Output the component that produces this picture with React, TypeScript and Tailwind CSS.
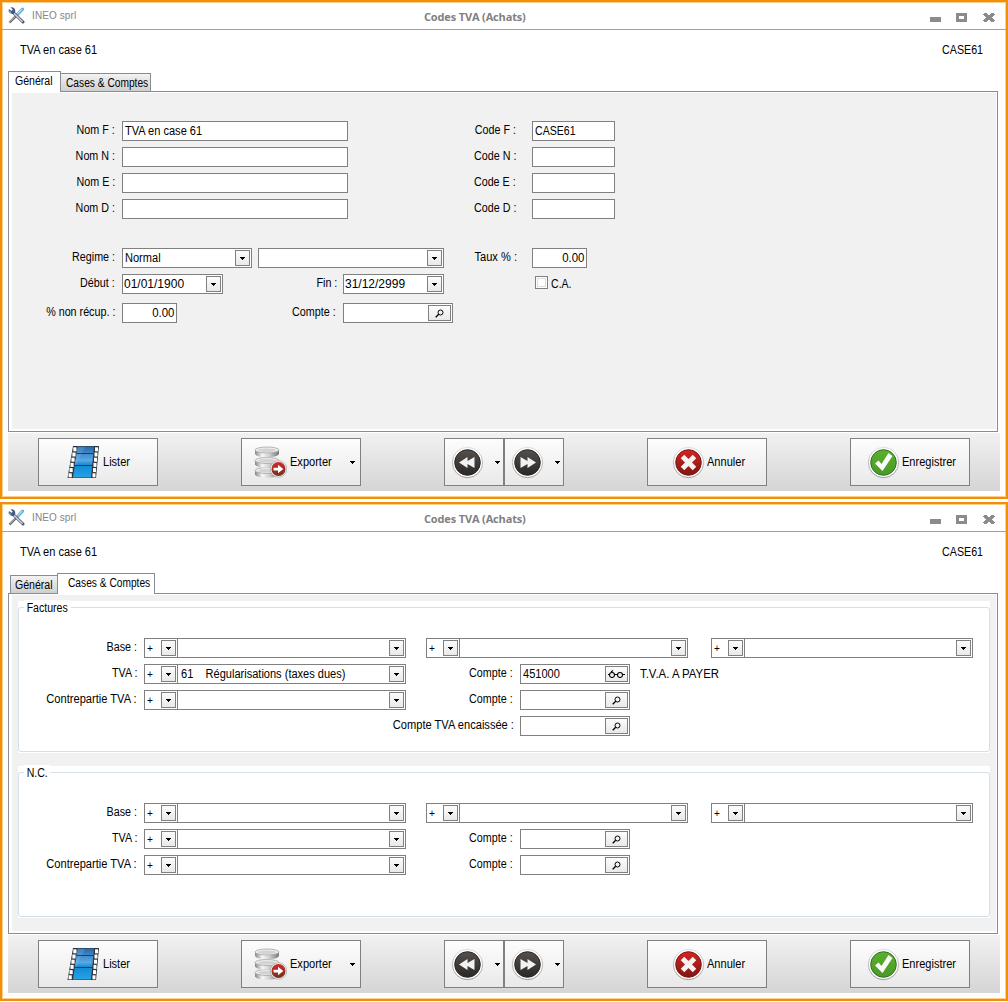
import React from "react";

function Tools() {
  return (
    <svg width="17" height="17" viewBox="0 0 17 17" className="shrink-0">
      <path d="M14.5 2.2 L9 8" stroke="#63aede" strokeWidth="3.2" strokeLinecap="round" />
      <path d="M14.3 1.8 L9.5 6.8" stroke="#b4def5" strokeWidth="1.2" />
      <path d="M9 8 L1.5 15.5" stroke="#5c5c5c" strokeWidth="2.4" />
      <path d="M8 8.6 L1.5 15" stroke="#d5d5d5" strokeWidth="1" />
      <path d="M5.2 5.5 L15 15" stroke="#4b5563" strokeWidth="3" strokeLinecap="round" />
      <path d="M6 6.4 L14.6 14.7" stroke="#c9d0da" strokeWidth="1.5" />
      <path d="M1 2.6 Q0.6 6.5 5 6.5 L7 4.4 Q7 0.5 3.4 0.5 L5 2.6 L3.5 4.2 Z" fill="#3f6297" stroke="#2b3b5c" strokeWidth="0.6" />
      <path d="M1.4 4 L3 5.6" stroke="#a8c8ea" strokeWidth="1" />
    </svg>
  );
}

function Film() {
  const holes = [0, 1, 2, 3, 4, 5];
  return (
    <svg width="33" height="34" viewBox="0 0 33 34" className="shrink-0">
      <defs>
        <linearGradient id="film" x1="0" y1="0" x2="0" y2="1">
          <stop offset="0" stopColor="#2767ad" />
          <stop offset="0.45" stopColor="#59a9e3" />
          <stop offset="0.6" stopColor="#1289d3" />
          <stop offset="1" stopColor="#27a3e6" />
        </linearGradient>
      </defs>
      <path d="M6 1 H32 L29 33 H0.5 Z" fill="#30343a" />
      <path d="M10.5 1.5 H27 L24 32.5 H6 Z" fill="url(#film)" />
      <path d="M11 2 H18 L9 20 L7.5 20 Z" fill="#8fc6ee" opacity="0.25" />
      <path d="M10 8.5 H26.5 M7.5 20.5 H25.5" stroke="#17406b" strokeWidth="1.2" />
      {holes.map((i) => (
        <g key={i} fill="#fff">
          <rect x={6.3 - i * 0.95} y={2.3 + i * 5.2} width="3.2" height="4" />
          <rect x={28 - i * 0.5} y={2.3 + i * 5.2} width="3" height="4" />
        </g>
      ))}
    </svg>
  );
}

function Database() {
  return (
    <svg width="33" height="34" viewBox="0 0 33 34" className="shrink-0">
      <defs>
        <linearGradient id="disk" x1="0" y1="0" x2="1" y2="0">
          <stop offset="0" stopColor="#858585" />
          <stop offset="0.3" stopColor="#f7f7f7" />
          <stop offset="0.6" stopColor="#cfcfcf" />
          <stop offset="1" stopColor="#777" />
        </linearGradient>
        <linearGradient id="exp" x1="0" y1="0" x2="0" y2="1">
          <stop offset="0" stopColor="#d3292c" />
          <stop offset="1" stopColor="#6e3417" />
        </linearGradient>
      </defs>
      {[22.5, 12.5, 2].map((y) => (
        <g key={y} transform={`translate(0 ${y})`}>
          <path d="M1 3 V7 Q3 10.200 13 10.200 Q23 10.200 25 7 V3 Z" fill="url(#disk)" />
          <ellipse cx="13" cy="3" rx="12" ry="3" fill="#ededed" stroke="#a5a5a5" strokeWidth="0.8" />
          <ellipse cx="13" cy="3.2" rx="9" ry="1.800" fill="#d3d3d3" />
        </g>
      ))}
      <circle cx="24.500" cy="24" r="8.300" fill="#ececec" stroke="#a5a5a5" strokeWidth="0.7" />
      <circle cx="24.500" cy="24" r="7" fill="url(#exp)" />
      <path d="M19.500 22.700 H24 V19.700 L29.300 24 L24 28.300 V25.400 H19.500 Z" fill="#fff" />
    </svg>
  );
}

function Round({ kind }: { kind: "back" | "next" | "cancel" | "ok" }) {
  const fill = { back: "#55504c", next: "#55504c", cancel: "#d62424", ok: "#5bb02b" }[kind];
  const dark = { back: "#2b2725", next: "#2b2725", cancel: "#7d1713", ok: "#2d7223" }[kind];
  return (
    <svg width="33" height="33" viewBox="0 0 33 33" className="shrink-0">
      <defs>
        <linearGradient id={"rim" + kind} x1="0" y1="0" x2="0" y2="1">
          <stop offset="0" stopColor="#dddddd" />
          <stop offset="1" stopColor="#999999" />
        </linearGradient>
        <linearGradient id={"face" + kind} x1="0" y1="0" x2="0" y2="1">
          <stop offset="0" stopColor={fill} />
          <stop offset="1" stopColor={kind === "ok" ? "#4a9a26" : dark} />
        </linearGradient>
      </defs>
      <circle cx="16.500" cy="16.500" r="15.200" fill="#fcfcfc" stroke={"url(#rim" + kind + ")"} strokeWidth="1" />
      <circle cx="16.500" cy="16.500" r="12.800" fill={"url(#face" + kind + ")"} stroke={dark} strokeWidth="1" />
      {kind === "back" && <path d="M8 16.500 L16.500 11 V15 L23.500 11 V22 L16.500 18 V22 Z" fill="#f2f2f2" />}
      {kind === "next" && <path d="M25 16.500 L16.500 11 V15 L9.500 11 V22 L16.500 18 V22 Z" fill="#f2f2f2" />}
      {kind === "cancel" && <path d="M10.500 10.500 L22.500 22.500 M22.500 10.500 L10.500 22.500" stroke="#f3f3f3" strokeWidth="5" />}
      {kind === "ok" && <path d="M8 17.500 L11.500 14.500 L14.500 18 L21.500 7 L25.500 10 L15.500 25 Z" fill="#fafafa" />}
    </svg>
  );
}

function Caret() {
  return (
    <svg width="5" height="3" viewBox="0 0 5 3" shapeRendering="crispEdges" className="shrink-0">
      <path d="M0 0 H5 V1 H4 V2 H3 V3 H2 V2 H1 V1 H0 Z" fill="#000" />
    </svg>
  );
}

function Magnifier() {
  return (
    <svg width="9" height="9" viewBox="0 0 9 9" className="shrink-0">
      <circle cx="5.500" cy="3.500" r="2.500" fill="none" stroke="#000" strokeWidth="1" />
      <path d="M3.700 5.300 L0.700 8.300" stroke="#000" strokeWidth="1.300" />
    </svg>
  );
}

function Glasses() {
  return (
    <svg width="17" height="8" viewBox="0 0 17 8" className="-mt-px shrink-0">
      <g fill="none" stroke="#000" strokeWidth="1.1">
        <circle cx="4" cy="5" r="2.500" />
        <circle cx="12" cy="5" r="2.500" />
        <path d="M6.500 4.500 H9.500 M0 4.500 H1.500 M14.500 4.500 H17 M3 2 L5 0.500" />
      </g>
    </svg>
  );
}

function Face({ wide, children }: { wide?: boolean; children: React.ReactNode }) {
  return (
    <div
      className={
        "mr-px ml-auto flex h-4 shrink-0 items-center justify-center border border-[#808080] bg-linear-to-b from-[#fcfcfc] to-[#e9e9e9] " +
        (wide ? "w-[23px]" : "w-[15px]")
      }
    >
      {children}
    </div>
  );
}

const base = "inline-block origin-left whitespace-pre scale-x-[0.92]";
const tight = "inline-block origin-left whitespace-pre scale-x-[0.88]";
const tighter = "inline-block origin-left whitespace-pre scale-x-[0.85]";

type FieldProps = { cls: string; value?: string; kind?: "combo" | "find" | "view"; date?: boolean; right?: boolean; fit?: string };

function Field({ cls, value = "", kind, date, right, fit = base }: FieldProps) {
  return (
    <div className={"flex h-5 shrink-0 items-center border border-[#808080] bg-white " + cls}>
      {value !== "" && (
        <span
          className={
            right
              ? "mr-[2px] ml-auto inline-block origin-right scale-x-[0.95] leading-[18px]"
              : date
                ? "-mr-2 pl-px leading-[18px]"
                : "-mr-4 ml-[2px] leading-[18px] " + fit
          }
        >
          {value}
        </span>
      )}
      {kind === "combo" && (
        <Face>
          <Caret />
        </Face>
      )}
      {kind === "find" && (
        <Face wide>
          <Magnifier />
        </Face>
      )}
      {kind === "view" && (
        <Face wide>
          <Glasses />
        </Face>
      )}
    </div>
  );
}

function Label({ cls, long, children }: { cls: string; long?: boolean; children: React.ReactNode }) {
  return (
    <span className={"shrink-0 text-right leading-[18px] whitespace-nowrap " + cls}>
      <span className={"inline-block origin-right " + (long ? "scale-x-[0.925]" : "scale-x-[0.895]")}>{children}</span>
    </span>
  );
}

function Row({ cls = "mb-1.5", children }: { cls?: string; children: React.ReactNode }) {
  return <div className={"flex h-5 items-start " + cls}>{children}</div>;
}

function Signed({ cls, value }: { cls: string; value?: string }) {
  return (
    <div className={"flex shrink-0 " + cls}>
      <Field cls="w-[34px] text-[11px]" value="+" kind="combo" />
      <Field cls="-ml-px w-[229px] pl-px" value={value} kind="combo" />
    </div>
  );
}

function General() {
  return (
    <div className="h-full pt-7">
      {["F", "N", "E", "D"].map((l) => (
        <Row key={l}>
          <Label cls="w-[103px]">Nom {l} :</Label>
          <Field cls="ml-[7px] w-[226px]" value={l === "F" ? "TVA en case 61" : ""} />
          <Label cls="w-[168px]">Code {l} :</Label>
          <Field cls="ml-4 w-[83px]" value={l === "F" ? "CASE61" : ""} fit={tight} />
        </Row>
      ))}
      <Row cls="mt-[29px] mb-1.5">
        <Label cls="w-[103px]">Regime :</Label>
        <Field cls="ml-[7px] w-[130px]" value="Normal" kind="combo" />
        <Field cls="ml-1.5 w-[186px]" kind="combo" />
        <Label cls="w-[73px]" long>
          Taux % :
        </Label>
        <Field cls="ml-[15px] w-[55px]" value="0.00" right />
      </Row>
      <Row cls="mb-[9px]">
        <Label cls="w-[103px]">Début :</Label>
        <Field cls="ml-[7px] w-[101px]" value="01/01/1900" kind="combo" date />
        <Label cls="w-[114px]">Fin :</Label>
        <Field cls="ml-1.5 w-[101px]" value="31/12/2999" kind="combo" date />
        <div className="mt-0.5 ml-[91px] size-[13px] border border-[#808080] bg-white p-px">
          <div className="h-full border border-[#dcdcdc]" />
        </div>
        <span className={tight + " ml-[3px] leading-5"}>C.A.</span>
      </Row>
      <Row>
        <Label cls="w-[103px]">% non récup. :</Label>
        <Field cls="ml-[7px] w-[55px]" value="0.00" right />
        <Label cls="w-[159px]">Compte :</Label>
        <Field cls="ml-[7px] w-[110px]" kind="find" />
      </Row>
    </div>
  );
}

function Group({ title, cls, filled }: { title: string; cls: string; filled?: boolean }) {
  return (
    <section className={"bg-white pt-1.5 " + cls}>
      <div className="h-[145px] rounded-[3px] border border-[#d5dfe8]">
        <div className="-mt-[9px] ml-[5px] h-[39px]">
          <span className={tight + " bg-white px-[3px] leading-4"}>{title}</span>
        </div>
        <Row>
          <Label cls="w-[118px]">Base :</Label>
          <Signed cls="ml-[7px]" />
          <Signed cls="ml-5" />
          <Signed cls="ml-[23px]" />
        </Row>
        <Row>
          <Label cls="w-[118px]">TVA :</Label>
          <Signed cls="ml-[7px]" value={filled ? "61    Régularisations (taxes dues)" : ""} />
          <Label cls="w-[107px]">Compte :</Label>
          <Field cls="ml-[7px] w-[110px]" value={filled ? "451000" : ""} kind={filled ? "view" : "find"} />
          {filled && <span className="ml-2.5 inline-block origin-left scale-x-[0.95] leading-5">T.V.A. A PAYER</span>}
        </Row>
        <Row>
          <Label cls="w-[118px]" long>
            Contrepartie TVA :
          </Label>
          <Signed cls="ml-[7px]" />
          <Label cls="w-[107px]">Compte :</Label>
          <Field cls="ml-[7px] w-[110px]" kind="find" />
        </Row>
        {filled && (
          <Row>
            <Label cls="w-[495px]" long>
              Compte TVA encaissée :
            </Label>
            <Field cls="ml-1.5 w-[110px]" kind="find" />
          </Row>
        )}
      </div>
    </section>
  );
}

function Accounts() {
  return (
    <div className="flex h-full flex-col pt-1.5 pr-[6px] pl-1.5">
      <Group title="Factures" cls="h-[152px]" filled />
      <Group title="N.C." cls="mt-[13px] h-[152px]" />
    </div>
  );
}

const press = "flex h-12 shrink-0 items-center border border-[#808080] bg-linear-to-b from-[#fdfdfd] to-[#e9e9e9] ";

function Toolbar() {
  return (
    <div className="mt-px ml-[5px] flex h-[58px] w-[992px] shrink-0 items-start bg-linear-to-b from-[#f1f1f1] to-[#d5d5d5] pt-[5px] pl-[30px]">
      <button className={press + "w-[120px] pl-7"}>
        <Film />
        <span className={base + " ml-[3px]"}>Lister</span>
      </button>
      <button className={press + "ml-[83px] w-[120px] pl-3"}>
        <Database />
        <span className={base + " ml-[3px]"}>Exporter</span>
        <span className="mr-[5px] ml-auto">
          <Caret />
        </span>
      </button>
      <button className={press + "ml-[83px] w-[60px] pl-1.5"}>
        <Round kind="back" />
        <span className="mr-[3px] ml-auto">
          <Caret />
        </span>
      </button>
      <button className={press + "w-[60px] pl-1.5"}>
        <Round kind="next" />
        <span className="mr-[3px] ml-auto">
          <Caret />
        </span>
      </button>
      <button className={press + "ml-[83px] w-[120px] pl-6"}>
        <Round kind="cancel" />
        <span className={base + " ml-[2px]"}>Annuler</span>
      </button>
      <button className={press + "ml-[83px] w-[120px] pl-4"}>
        <Round kind="ok" />
        <span className={base + " ml-[2px]"}>Enregistrer</span>
      </button>
    </div>
  );
}

const idle = "border border-b-0 border-[#898c95] bg-linear-to-b from-[#f3f3f3] to-[#cfcfcf] ";
const active = "relative z-10 -mb-px border border-b-0 border-[#898c95] bg-white ";

function Window({ tab }: { tab: "general" | "accounts" }) {
  const first = tab === "general";
  return (
    <section className="h-[499px] w-[1008px] shrink-0 border-2 border-[#f09008] bg-white">
      <div className="flex h-[495px] flex-col border border-[#fcd08c]">
        <header className="-mr-[3px] -ml-px flex h-[27px] shrink-0 items-start border-b border-[#a0a0a0]">
          <div className="ml-[6px] flex w-[416px] pt-[4px]">
            <Tools />
            <span className="ml-[7px] pt-[2px] text-[10px] leading-[14px] tracking-[0.1px] text-[#858585]">INEO sprl</span>
          </div>
          <h1 className="pt-[6px] font-['Open_Sans',sans-serif] text-[11px] leading-4 font-bold tracking-[-0.15px] whitespace-nowrap text-[#808080]">
            Codes TVA (Achats)
          </h1>
          <svg width="65" height="10" viewBox="0 0 65 10" shapeRendering="crispEdges" className="mt-[10px] mr-[13px] ml-auto">
            <path d="M0 4 H11 V9 H0 Z M26 0 H37 V9 H26 Z M29 3 V6 H34 V3 Z" fill="#8b8b8b" fillRule="evenodd" />
            <path
              d="M54 0 H57 V1 H58 V2 H60 V1 H61 V0 H64 V1 H65 V2 H64 V3 H63 V4 H62 V5 H63 V6 H64 V7 H65 V8 H64 V9 H61 V8 H60 V7 H58 V8 H57 V9 H54 V8 H53 V7 H54 V6 H55 V5 H56 V4 H55 V3 H54 V2 H53 V1 H54 Z"
              fill="#8b8b8b"
            />
          </svg>
        </header>
        <div className="flex h-[41px] shrink-0 items-center justify-between pr-[22px] pb-[2px] pl-[17px]">
          <span className={base}>TVA en case 61</span>
          <span className="inline-block origin-right scale-x-[0.89]">CASE61</span>
        </div>
        <div className="ml-[5px] flex h-5 shrink-0 items-end">
          {first ? (
            <>
              <div className={active + "h-[21px] w-[53px] pl-[6px] leading-[18px]"}>
                <span className={tight}>Général</span>
              </div>
              <div className={idle + "-ml-px h-[18px] w-[91px] pl-[5px] leading-[19px]"}>
                <span className={tighter}>Cases &amp; Comptes</span>
              </div>
            </>
          ) : (
            <>
              <div className={idle + "ml-[2px] h-[18px] w-[48px] pl-[4px] leading-[19px]"}>
                <span className={tight}>Général</span>
              </div>
              <div className={active + "-ml-px h-[21px] w-[98px] pl-[10px] leading-[19px]"}>
                <span className={tighter}>Cases &amp; Comptes</span>
              </div>
            </>
          )}
        </div>
        <div className="ml-[5px] h-[341px] w-[990px] shrink-0 border border-[#898c95] bg-white pt-px pr-px pb-[2px] pl-[3px]">
          <div className="h-full bg-[#f1f1f1]">{first ? <General /> : <Accounts />}</div>
        </div>
        <Toolbar />
      </div>
    </section>
  );
}

export default function App() {
  return (
    <main className="flex h-[1002px] w-[1008px] flex-col gap-[3px] overflow-hidden bg-white font-['Liberation_Sans',Arial,sans-serif] text-[12px] text-black">
      <Window tab="general" />
      <Window tab="accounts" />
    </main>
  );
}
